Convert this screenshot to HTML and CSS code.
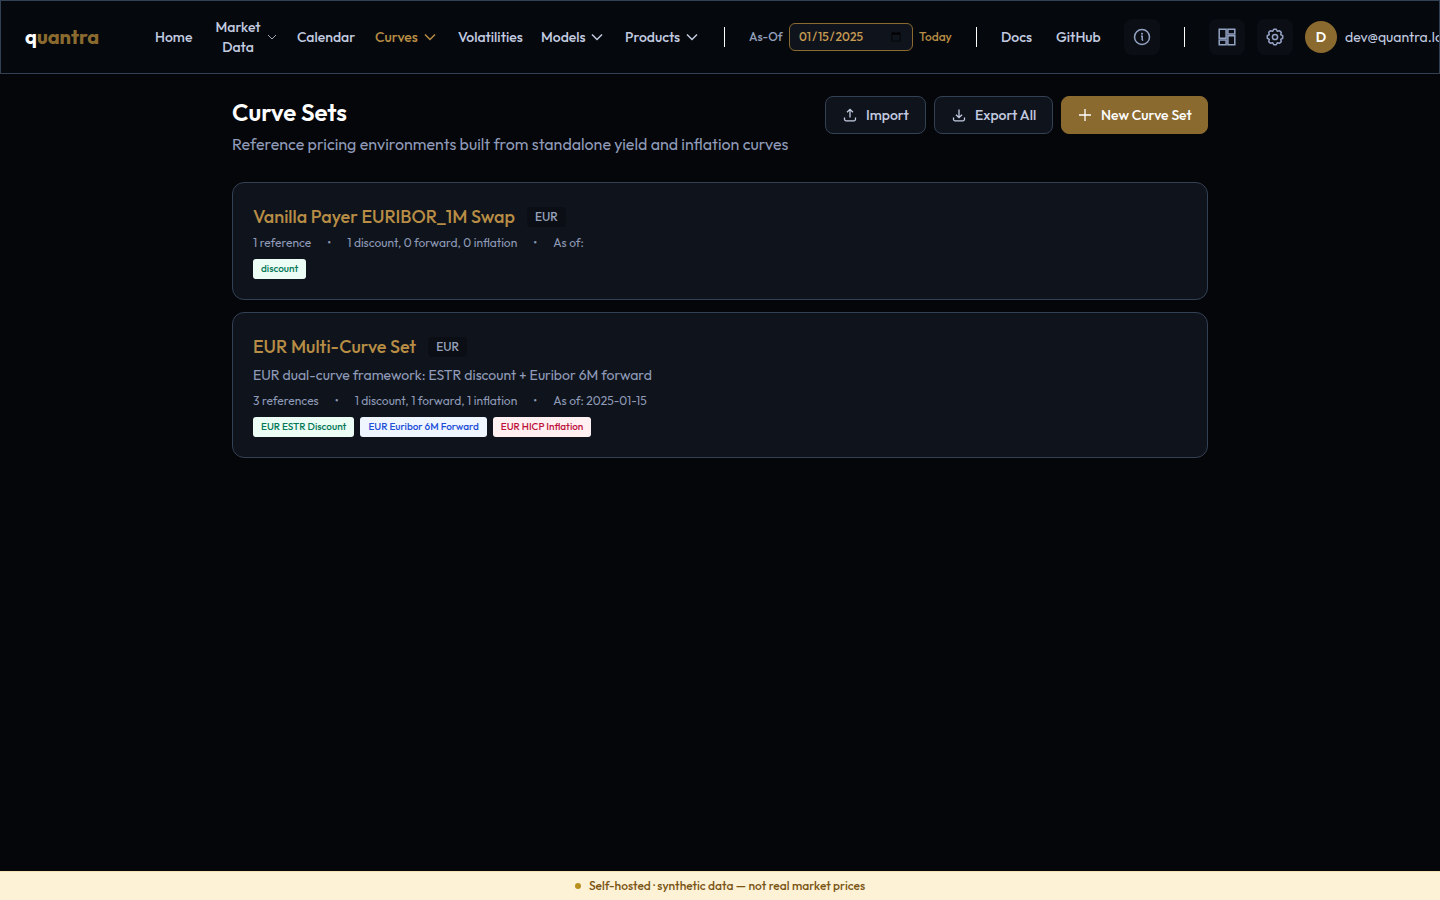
FILE: index.html
```html
<!DOCTYPE html>
<html lang="en">
<head>
<meta charset="utf-8">
<title>Curve Sets - quantra</title>
<link rel="stylesheet" href="styles.css">
</head>
<body>
<header class="topbar">
  <a class="logo" href="#"><span class="logo-q">q</span>uantra</a>
  <nav class="nav" aria-label="Main">
    <a class="nav-item w-home" href="#">Home</a>
    <button class="nav-item w-market" type="button"><span class="two-line">Market Data</span><svg class="chev-small" viewBox="0 0 10 10"><path d="M1 3l4 4 4-4"/></svg></button>
    <a class="nav-item w-calendar" href="#">Calendar</a>
    <button class="nav-item w-curves active" type="button">Curves<svg class="chev" viewBox="0 0 14 14"><path d="M1 4.500l5 5 5-5"/></svg></button>
    <a class="nav-item w-vol" href="#">Volatilities</a>
    <button class="nav-item w-models" type="button">Models<svg class="chev" viewBox="0 0 14 14"><path d="M1 4.500l5 5 5-5"/></svg></button>
    <button class="nav-item w-products" type="button">Products<svg class="chev" viewBox="0 0 14 14"><path d="M1 4.500l5 5 5-5"/></svg></button>
  </nav>
  <span class="divider"></span>
  <div class="asof">
    <label class="asof-label" for="asof">As-Of</label>
    <input class="asof-input" id="asof" type="date" value="2025-01-15">
    <button class="today" type="button">Today</button>
  </div>
  <span class="divider"></span>
  <a class="nav-item w-docs" href="#">Docs</a>
  <a class="nav-item w-github" href="#">GitHub</a>
  <button class="icon-btn" type="button" aria-label="About"><svg class="icon" viewBox="0 0 18 18"><circle cx="9" cy="9" r="7.500"/><path d="M8 8.200h1.200v4M9.200 12.200h1"/><circle class="dot" cx="9" cy="5.700" r="1"/></svg></button>
  <span class="divider"></span>
  <div class="user">
    <button class="icon-btn" type="button" aria-label="Dashboard"><svg class="icon" viewBox="0 0 18 18"><path d="M1.200 1.200h6.900v9H1.200zM9.900 1.200h6.900V6H9.900zM1.200 12h6.900v4.800H1.200zM9.900 7.800h6.900v9H9.900z"/></svg></button>
    <button class="icon-btn" type="button" aria-label="Settings"><svg class="icon" viewBox="0 0 18 18"><path stroke-linejoin="round" d="M7.750 1.300h2.500L11.400 3.300l2.200-.6 1.700 1.700-.6 2.200 2 1.150v2.500l-2 1.150.6 2.200-1.700 1.700-2.200-.6-1.150 2h-2.500l-1.150-2-2.200.6-1.700-1.700.6-2.200-2-1.150v-2.500l2-1.150-.6-2.200 1.700-1.700 2.200.6z"/><circle cx="9" cy="9" r="2.600"/></svg></button>
    <span class="avatar">D</span>
    <span class="email">dev@quantra.local</span>
  </div>
</header>
<main class="page">
  <div class="page-head">
    <div class="page-titles">
      <h1 class="title">Curve Sets</h1>
      <p class="subtitle">Reference pricing environments built from standalone yield and inflation curves</p>
    </div>
    <div class="actions">
      <button class="btn w-import" type="button"><svg class="btn-icon" viewBox="0 0 16 16"><path d="M8 10.500V2.500M5 5.300l3-3 3 3M2.500 10.500v1.800a1.500 1.500 0 0 0 1.500 1.500h8a1.500 1.500 0 0 0 1.500-1.500v-1.800"/></svg>Import</button>
      <button class="btn w-export" type="button"><svg class="btn-icon" viewBox="0 0 16 16"><path d="M8 2.500v8M5 7.700l3 3 3-3M2.500 10.500v1.800a1.500 1.500 0 0 0 1.500 1.500h8a1.500 1.500 0 0 0 1.500-1.500v-1.800"/></svg>Export All</button>
      <button class="btn primary w-new" type="button"><svg class="btn-icon" viewBox="0 0 16 16"><path d="M8 2v12M2 8h12"/></svg>New Curve Set</button>
    </div>
  </div>
  <section class="cards">
    <article class="card">
      <div class="card-head"><h2 class="card-title">Vanilla Payer EURIBOR_1M Swap</h2><span class="ccy">EUR</span></div>
      <div class="meta"><span>1 reference</span><span>•</span><span>1 discount, 0 forward, 0 inflation</span><span>•</span><span>As of:</span></div>
      <div class="tags"><span class="tag green">discount</span></div>
    </article>
    <article class="card">
      <div class="card-head"><h2 class="card-title">EUR Multi-Curve Set</h2><span class="ccy">EUR</span></div>
      <p class="desc">EUR dual-curve framework: ESTR discount + Euribor 6M forward</p>
      <div class="meta"><span>3 references</span><span>•</span><span>1 discount, 1 forward, 1 inflation</span><span>•</span><span>As of: 2025-01-15</span></div>
      <div class="tags"><span class="tag green">EUR ESTR Discount</span><span class="tag blue">EUR Euribor 6M Forward</span><span class="tag red">EUR HICP Inflation</span></div>
    </article>
  </section>
</main>
<footer class="notice"><span class="notice-dot"></span>Self-hosted · synthetic data — not real market prices</footer>
</body>
</html>
```
FILE: styles.css
```css
* { box-sizing: border-box; }
body {
  margin: 0;
  min-height: 100vh;
  display: flex;
  flex-direction: column;
  background: #050609;
  color: #c3cbe0;
  font-family: Outfit, Lato, "Open Sans", sans-serif;
  font-size: 14px;
  line-height: 20px;
  overflow-x: hidden;
}
h1, h2, p { margin: 0; }
a { color: inherit; text-decoration: none; }
button { font: inherit; color: inherit; background: none; border: 0; padding: 0; }
svg { fill: none; stroke: currentColor; flex: none; }

.topbar {
  display: flex;
  align-items: center;
  gap: 24px;
  padding: 16px 24px;
  border: 1px solid #334155;
  background: #05090d;
  overflow: hidden;
  white-space: nowrap;
}
.topbar > * { flex: none; }
.logo { width: 106px; font-size: 20px; line-height: 28px; font-weight: 700; color: #8b6a2f; }
.logo-q { color: #fff; }
.nav { display: flex; align-items: center; gap: 20px; }
.nav-item { display: flex; align-items: center; justify-content: space-between; font-weight: 500; }
.two-line { width: 50px; white-space: normal; text-align: center; }
.w-home { width: 38px; }
.w-market { width: 64px; }
.w-calendar { width: 58px; }
.w-curves { width: 63px; }
.w-vol { width: 63px; }
.w-models { width: 64px; }
.w-products { width: 75px; }
.w-docs { width: 31px; }
.w-github { width: 44px; }
.active { color: #b88d45; }
.chev { width: 14px; height: 14px; stroke-width: 1.5; }
.chev-small { width: 10px; height: 10px; stroke-width: 0.8; }
.divider { width: 1px; height: 20px; background: #fff; }
.asof { display: flex; align-items: center; gap: 6px; font-size: 12px; font-weight: 500; }
.asof-label { width: 34px; color: #94a0bb; }
.asof-input {
  width: 124px;
  height: 28px;
  padding: 0 8px;
  border: 1px solid #8b6a2f;
  border-radius: 6px;
  background: #0f141c;
  color: #c79b52;
  font: inherit;
}
.today { width: 33px; color: #b88d45; text-align: left; }
.icon-btn {
  display: flex;
  align-items: center;
  justify-content: center;
  width: 36px;
  height: 36px;
  border-radius: 8px;
  background: #0b0e14;
  color: #94a3c4;
}
.icon { width: 18px; height: 18px; stroke-width: 1.5; }
.dot { fill: currentColor; stroke: none; }
.user { display: flex; align-items: center; gap: 12px; }
.avatar {
  width: 32px;
  height: 32px;
  border-radius: 50%;
  background: #8b6a2f;
  color: #fff;
  font-weight: 600;
  line-height: 32px;
  text-align: center;
}
.email { margin-left: -4px; }

.page { flex: 1; width: 100%; max-width: 1024px; margin: 0 auto; padding: 22px 24px; }
.page-head { display: flex; justify-content: space-between; align-items: flex-start; margin-bottom: 26px; }
.title { font-size: 24px; line-height: 32px; font-weight: 600; color: #fff; }
.subtitle { margin-top: 4px; font-size: 16px; line-height: 24px; color: #8f9bb8; }
.actions { display: flex; gap: 8px; }
.btn {
  display: flex;
  align-items: center;
  gap: 8px;
  height: 38px;
  padding: 0 16px;
  border: 1px solid #334155;
  border-radius: 8px;
  background: #0f141c;
  font-weight: 500;
  white-space: nowrap;
}
.btn-icon { width: 16px; height: 16px; stroke-width: 1.3; }
.w-import { width: 101px; }
.w-export { width: 119px; }
.w-new { width: 147px; }
.primary { background: #8b6a2f; border-color: #8b6a2f; color: #fff; padding: 0 15px; }

.cards { display: flex; flex-direction: column; gap: 12px; }
.card {
  display: flex;
  flex-direction: column;
  gap: 4px;
  padding: 20px;
  border: 1px solid #334155;
  border-radius: 12px;
  background: #0f141c;
}
.card-head { display: flex; align-items: center; gap: 12px; }
.card-title { font-size: 18px; line-height: 28px; font-weight: 500; color: #b88d45; }
.ccy { padding: 2px 8px; border-radius: 4px; background: #0b0e14; color: #94a0bb; font-size: 12px; line-height: 16px; font-weight: 500; }
.desc { margin-bottom: 4px; color: #8f9bb8; }
.meta { display: flex; gap: 16px; font-size: 12px; line-height: 16px; color: #8f9bb8; }
.tags { display: flex; gap: 6px; margin-top: 4px; }
.tag { padding: 2px 8px; border-radius: 3px; font-size: 10px; line-height: 16px; font-weight: 500; }
.green { background: #ecfdf5; color: #047857; }
.blue { background: #eff6ff; color: #1d4ed8; }
.red { background: #fff1f2; color: #be123c; }

.notice {
  display: flex;
  align-items: center;
  justify-content: center;
  gap: 8px;
  border-top: 1px solid #f5e3b3;
  background: #fdf2d6;
  color: #7a5514;
  font-size: 12px;
  line-height: 28px;
  font-weight: 500;
}
.notice-dot { width: 6px; height: 6px; border-radius: 50%; background: #b8901f; }
```
